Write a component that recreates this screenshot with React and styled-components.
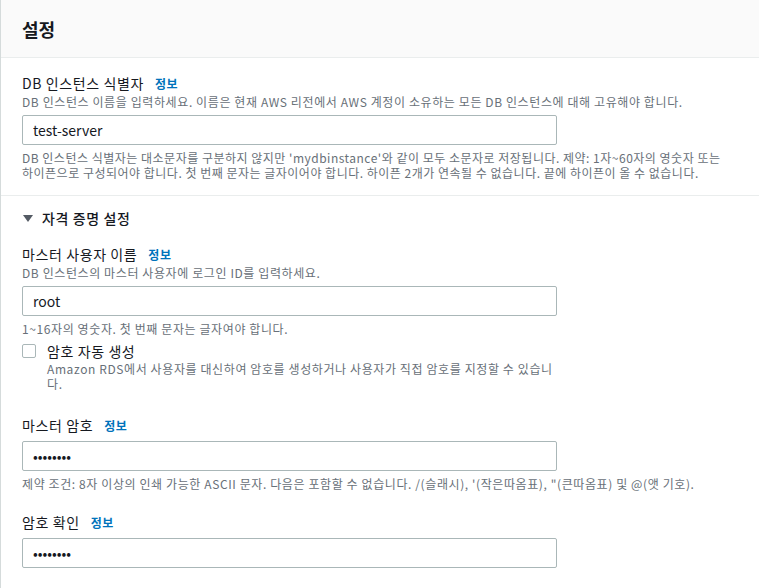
import React from 'react'
import styled, { createGlobalStyle } from 'styled-components'

const GlobalStyle = createGlobalStyle`
  html, body {
    margin: 0;
    padding: 0;
    background: #ffffff;
    overflow: hidden;
  }
  body {
    font-family: "Noto Sans CJK KR", "Noto Sans", sans-serif;
    color: #16191f;
    letter-spacing: 0.6px;
  }
`

const Panel = styled.div`
  border-left: 1px solid #d5dbdb;
  height: 588px;
  box-sizing: border-box;
  background: #ffffff;
`

const Header = styled.div`
  background: #fafafa;
  border-bottom: 1px solid #eaeded;
  height: 58px;
  box-sizing: border-box;
  padding: 0 20px 0 21px;
  display: flex;
  align-items: center;
`

const Title = styled.h2`
  margin: 0;
  font-size: 18px;
  font-weight: 700;
  line-height: 22px;
  letter-spacing: 0;
  color: #16191f;
`

const Section = styled.div`
  padding: ${p => p.$pad || '15px 20px 15px 21px'};
  border-bottom: ${p => (p.$divider ? '1px solid #eaeded' : 'none')};
`

const Field = styled.div`
  display: flex;
  flex-direction: column;
  margin-top: ${p => p.$gap || 0}px;
`

const LabelRow = styled.div`
  display: flex;
  align-items: baseline;
  gap: 11px;
  font-size: 14px;
  line-height: 20px;
  color: #16191f;
`

const InfoLink = styled.a`
  font-size: 12px;
  font-weight: 700;
  color: #0073bb;
  text-decoration: none;
`

const Description = styled.div`
  font-size: 12px;
  line-height: ${p => p.$lh || 16}px;
  color: #687078;
  max-width: ${p => p.$max || 'none'};
  letter-spacing: ${p => p.$ls || '0.6px'};
  word-break: ${p => (p.$breakAll ? 'break-all' : 'normal')};
`

const Input = styled.input`
  width: 535px;
  height: 30px;
  box-sizing: border-box;
  margin: 5px 0 5px;
  border: 1px solid #aab7b8;
  border-radius: 2px;
  padding: 0 10px;
  font-family: inherit;
  font-size: 14px;
  letter-spacing: 0;
  color: #16191f;
  background: #fff;
  outline: none;
`

const Expander = styled.div`
  display: flex;
  align-items: center;
  gap: 9px;
  font-size: 14px;
  line-height: 20px;
  color: #16191f;
  font-weight: 500;
`

const Caret = styled.span`
  width: 0;
  height: 0;
  border-left: 5px solid transparent;
  border-right: 5px solid transparent;
  border-top: 7px solid #545b64;
  margin-left: 1px;
`

const CheckRow = styled.div`
  display: flex;
  gap: 11px;
  margin-top: 4px;
`

const Box = styled.span`
  flex: none;
  width: 14px;
  height: 14px;
  box-sizing: border-box;
  border: 1px solid #aab7b8;
  border-radius: 2px;
  margin-top: 3px;
  background: #fff;
`

const CheckText = styled.div`
  display: flex;
  flex-direction: column;
`

const CheckLabel = styled.div`
  font-size: 14px;
  line-height: 20px;
  color: #16191f;
`

export default function App() {
  return (
    <>
      <GlobalStyle />
      <Panel>
        <Header>
          <Title>설정</Title>
        </Header>

        <Section $divider>
          <Field>
            <LabelRow>
              DB 인스턴스 식별자 <InfoLink>정보</InfoLink>
            </LabelRow>
            <Description>
              DB 인스턴스 이름을 입력하세요. 이름은 현재 AWS 리전에서 AWS 계정이 소유하는 모든 DB 인스턴스에 대해 고유해야 합니다.
            </Description>
            <Input defaultValue="test-server" />
            <Description $lh={15} $max="700px" $ls="0.5px" $breakAll>
              DB 인스턴스 식별자는 대소문자를 구분하지 않지만 'mydbinstance'와 같이 모두 소문자로 저장됩니다. 제약: 1자~60자의 영숫자 또는 하이픈으로 구성되어야 합니다. 첫 번째 문자는 글자이어야 합니다. 하이픈 2개가 연속될 수 없습니다. 끝에 하이픈이 올 수 없습니다.
            </Description>
          </Field>
        </Section>

        <Section $pad="12px 20px 6px 21px">
          <Expander>
            <Caret />
            자격 증명 설정
          </Expander>

          <Field $gap={16}>
            <LabelRow>
              마스터 사용자 이름 <InfoLink>정보</InfoLink>
            </LabelRow>
            <Description>DB 인스턴스의 마스터 사용자에 로그인 ID를 입력하세요.</Description>
            <Input defaultValue="root" />
            <Description>1~16자의 영숫자. 첫 번째 문자는 글자여야 합니다.</Description>
          </Field>

          <CheckRow>
            <Box />
            <CheckText>
              <CheckLabel>암호 자동 생성</CheckLabel>
              <Description $lh={15} $max="512px">
                Amazon RDS에서 사용자를 대신하여 암호를 생성하거나 사용자가 직접 암호를 지정할 수 있습니다.
              </Description>
            </CheckText>
          </CheckRow>

          <Field $gap={24}>
            <LabelRow>
              마스터 암호 <InfoLink>정보</InfoLink>
            </LabelRow>
            <Input type="password" defaultValue="password" />
            <Description>
              제약 조건: 8자 이상의 인쇄 가능한 ASCII 문자. 다음은 포함할 수 없습니다. /(슬래시), '(작은따옴표), "(큰따옴표) 및 @(앳 기호).
            </Description>
          </Field>

          <Field $gap={20}>
            <LabelRow>
              암호 확인 <InfoLink>정보</InfoLink>
            </LabelRow>
            <Input type="password" defaultValue="password" />
          </Field>
        </Section>
      </Panel>
    </>
  )
}
